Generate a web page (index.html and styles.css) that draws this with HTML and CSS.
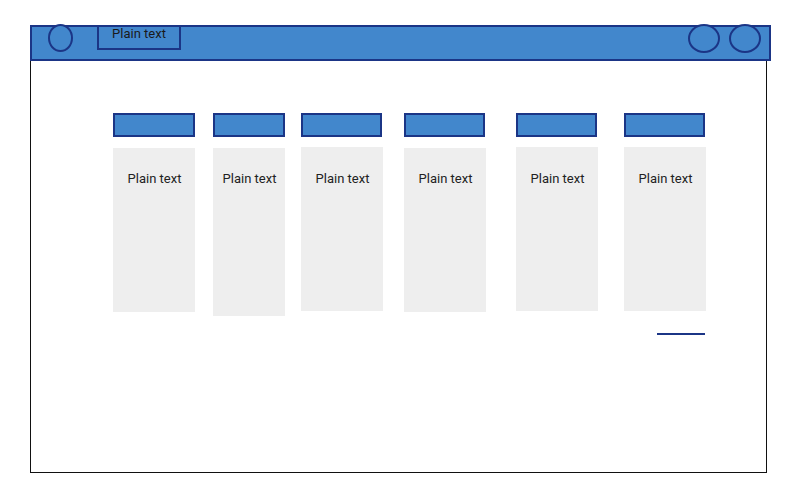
FILE: index.html
```html
<!DOCTYPE html>
<html>
<head>
<meta charset="utf-8">
<link rel="stylesheet" href="styles.css">
</head>
<body>
<div class="frame">
  <div class="header">
    <div class="circle circle-left"></div>
    <div class="title-box">Plain text</div>
    <div class="spacer"></div>
    <div class="circle circle-right"></div>
    <div class="circle circle-right second"></div>
  </div>
  <div class="columns">
    <div class="col c1"><div class="col-head"></div><div class="panel">Plain text</div></div>
    <div class="col c2"><div class="col-head"></div><div class="panel">Plain text</div></div>
    <div class="col c3"><div class="col-head"></div><div class="panel">Plain text</div></div>
    <div class="col c4"><div class="col-head"></div><div class="panel">Plain text</div></div>
    <div class="col c5"><div class="col-head"></div><div class="panel">Plain text</div></div>
    <div class="col c6"><div class="col-head"></div><div class="panel">Plain text</div></div>
  </div>
  <div class="link-row"><div class="underline"></div></div>
</div>
</body>
</html>
```
FILE: styles.css
```css
html, body {
  margin: 0;
  padding: 0;
  background: #ffffff;
}
body {
  font-family: Roboto, "Liberation Sans", Arial, sans-serif;
  color: #222222;
}
.frame {
  box-sizing: border-box;
  margin: 25px 0 0 30px;
  width: 737px;
  height: 448px;
  border-left: 1px solid #111;
  border-right: 1px solid #111;
  border-bottom: 1px solid #111;
}
.header {
  box-sizing: border-box;
  display: flex;
  align-items: flex-start;
  margin-left: -1px;
  width: 741px;
  height: 36px;
  background: #4287cc;
  border: 2px solid #1b3586;
}
.circle {
  box-sizing: border-box;
  border: 2px solid #1b3586;
  border-radius: 50%;
  background: #4287cc;
}
.circle-left {
  width: 25px;
  height: 28px;
  margin: -3px 0 0 16px;
}
.title-box {
  box-sizing: border-box;
  width: 84px;
  height: 25px;
  margin: -2px 0 0 24px;
  border: 2px solid #1b3586;
  font-size: 13px;
  line-height: 14px;
  padding-top: 0;
  text-align: center;
  color: #1a1a1a;
}
.spacer {
  flex: 1;
}
.circle-right {
  width: 32px;
  height: 29px;
  margin-top: -3px;
}
.circle-right.second {
  margin-left: 9px;
  margin-right: 8px;
}
.columns {
  display: flex;
  align-items: flex-start;
  padding: 52px 0 0 82px;
}
.col {
  display: flex;
  flex-direction: column;
  width: 82px;
}
.col-head {
  box-sizing: border-box;
  width: 82px;
  height: 24px;
  background: #4287cc;
  border: 2px solid #1b3586;
}
.panel {
  margin-top: 11px;
  height: 164px;
  background: #eeeeee;
  font-size: 13px;
  line-height: 16px;
  text-align: center;
  padding: 23px 0 0 1px;
  box-sizing: border-box;
}
.c2 { margin-left: 18px; width: 72px; }
.c2 .col-head { width: 72px; }
.c2 .panel { height: 168px; }
.c3 { margin-left: 16px; }
.c3 .col-head { width: 81px; }
.c3 .panel { margin-top: 10px; padding-top: 24px; }
.c4 { margin-left: 21px; }
.c4 .col-head { width: 81px; }
.c5 { margin-left: 30px; }
.c5 .col-head { width: 81px; }
.c5 .panel { margin-top: 10px; padding-top: 24px; }
.c6 { margin-left: 26px; }
.c6 .col-head { width: 81px; }
.c6 .panel { margin-top: 10px; padding-top: 24px; }
.link-row {
  display: flex;
  justify-content: flex-end;
  padding: 17px 61px 0 0;
}
.underline {
  width: 48px;
  height: 2px;
  background: #1b3586;
}
```
